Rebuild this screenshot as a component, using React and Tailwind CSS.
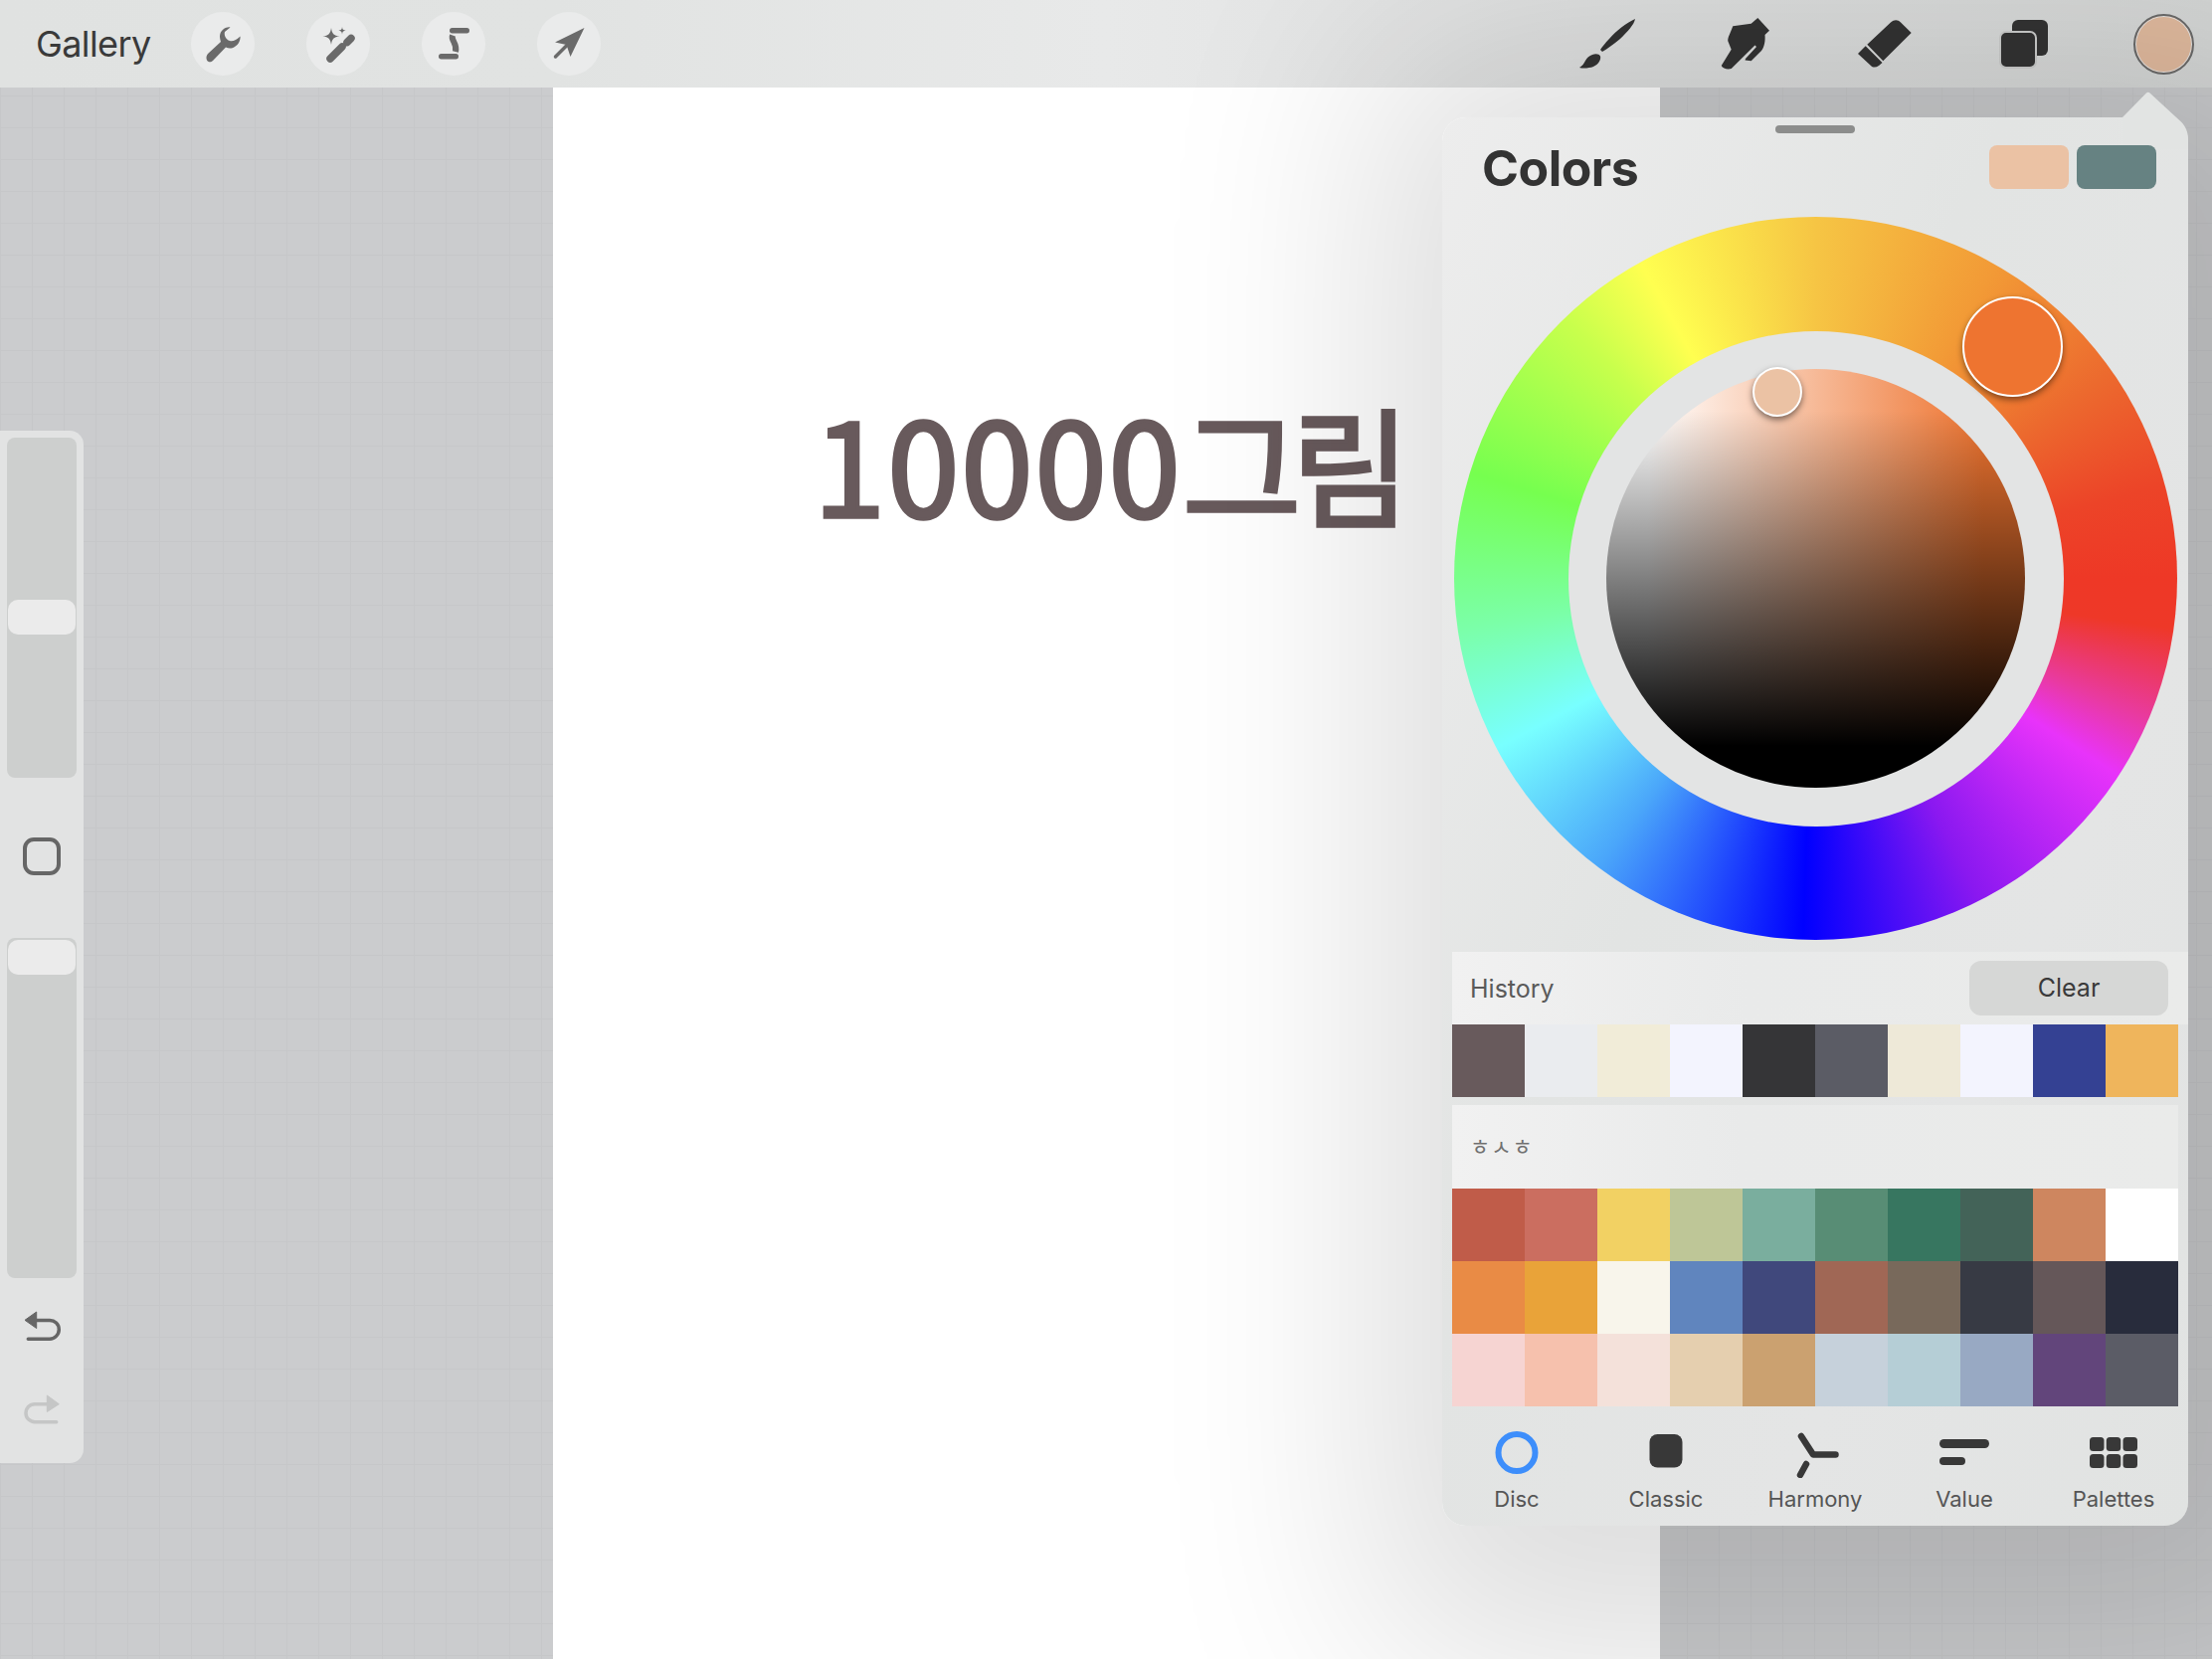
import React from "react";

const historyColors = ["#685A5C", "#EAECEF", "#F1ECD8", "#F3F4FE", "#353537", "#5B5C65", "#EEE9D8", "#F3F4FE", "#344193", "#EFB55C"];
const paletteColors = [
    "#C05C49", "#CB6E60", "#F2D163", "#BEC697", "#7AAE9E", "#588D75", "#377660", "#436358", "#CE865F", "#FFFFFF",
    "#E98B45", "#E9A339", "#F8F5EB", "#6085BE", "#40487C", "#A06755", "#78695B", "#373A44", "#655759", "#282C3C",
    "#F6D4D2", "#F6C1AD", "#F4E1DA", "#E5CFAF", "#CBA170", "#C6D1DB", "#B5CED6", "#98A9C3", "#62457B", "#5B5C66",
];

function ToolButton({ children }) {
    return (
        <div className="w-16 h-16 rounded-full bg-[#EAEBEB]">
            <svg viewBox="0 0 64 64" className="w-16 h-16" fill="#6A6A6A">
                {children}
            </svg>
        </div>
    );
}

function TopIcon({ children }) {
    return (
        <svg viewBox="0 0 60 60" className="w-[60px] h-[60px]" fill="#333333">
            {children}
        </svg>
    );
}

function Swatch({ color }) {
    return <div className="h-[73px]" style={{ backgroundColor: color }} />;
}

function Tab({ label, children }) {
    return (
        <div className="flex flex-col items-center">
            <svg viewBox="0 0 50 50" className="w-[50px] h-[50px]" fill="#383838">
                {children}
            </svg>
            <span className="mt-[6px] text-[22px] leading-[30px] text-[#555555]">{label}</span>
        </div>
    );
}

function Slider({ thumbTop }) {
    return (
        <div className={`w-[70px] h-[342px] mx-auto rounded-lg bg-[#CDCFCE] px-px ${thumbTop}`}>
            <div className="h-[35px] rounded-[10px] bg-[#EBEBEB]" />
        </div>
    );
}

function Sidebar() {
    return (
        <div className="w-[84px] h-[1038px] mt-[345px] pt-[7px] bg-[#E2E3E3] rounded-r-[14px]">
            <Slider thumbTop="pt-[163px]" />
            <div className="w-[38px] h-[38px] mx-auto mt-[60px] rounded-[11px] border-4 border-[#666666]" />
            <div className="mt-[63px]">
                <Slider thumbTop="pt-[2px]" />
            </div>
            <svg viewBox="0 0 40 40" className="w-10 h-10 ml-[22px] mt-[29px]">
                <path d="M3 13.3 14.7 5v16.5z" fill="#666666" stroke="#666666" strokeWidth="1" strokeLinejoin="round" />
                <path d="M14 13.5h14c5 0 9.300 3.500 9.300 9.200 0 5-4.300 9.600-9.300 9.600H6.300" fill="none" stroke="#666666" strokeWidth="3.500" strokeLinecap="round" />
            </svg>
            <svg viewBox="0 0 40 40" className="w-10 h-10 ml-[22px] mt-[44px]">
                <path d="M37.300 13.700 25.300 5v16.500z" fill="#C5C6C6" stroke="#C5C6C6" strokeWidth="1" strokeLinejoin="round" />
                <path d="M26 13.700H13c-5 0-9 3.800-9 9 0 5 4 9 9 9h21.700" fill="none" stroke="#C5C6C6" strokeWidth="3.500" strokeLinecap="round" />
            </svg>
        </div>
    );
}

function TopBar() {
    return (
        <div className="h-[88px] flex items-center justify-between pl-[36px] pr-[18px] bg-[linear-gradient(90deg,#E0E2E1,#E1E3E2_25%,#E8E9E9_50%,#E4E5E5_60%,#D6D8D7)]">
            <div className="flex items-center">
                <span className="w-[115px] text-[36px] leading-none text-[#3A3A3A] tracking-[-0.6px] mr-[41px]">Gallery</span>
                <div className="flex gap-[52px]">
                    <ToolButton>
                        <path d="M17 42 30 30c-2-6-1-10 3-13 2-1 4-2 6.500-1.500L34 20c-1 3 1 8 5 9 3 1 7-1 10.500-4.500.5 3.500-1.500 8.500-5.500 10.500-3 2-6 2-9 .5L22 49c-2 2-5 1.500-6-.5-1-2.500-.5-4.500 1-6.500z" />
                    </ToolButton>
                    <ToolButton>
                        <path d="M25 16c.8 6 2.500 7.700 8.500 8.500-6 .8-7.700 2.500-8.500 8.500-.8-6-2.500-7.700-8.500-8.500 6-.8 7.700-2.500 8.500-8.500zM36 15c.3 2.700 1 3.400 3.700 3.700-2.700.3-3.400 1-3.700 3.700-.3-2.700-1-3.400-3.700-3.700 2.700-.3 3.400-1 3.700-3.700z" />
                        <path d="M24 47 36 35M41 30.500l4-4" stroke="#6A6A6A" strokeWidth="7.500" strokeLinecap="round" fill="none" />
                    </ToolButton>
                    <ToolButton>
                        <rect x="28" y="16" width="20" height="5.500" rx="2.700" />
                        <rect x="17" y="42" width="20" height="5.500" rx="2.700" />
                        <path d="M31 23.500C29 29 36 31 34 40" stroke="#6A6A6A" strokeWidth="6" fill="none" />
                    </ToolButton>
                    <ToolButton>
                        <path d="M47.500 16 18 30.500 29.500 33 33.500 45z" />
                        <path d="M18.500 45 30 33.500" stroke="#6A6A6A" strokeWidth="3.500" strokeLinecap="round" />
                    </ToolButton>
                </div>
            </div>
            <div className="flex items-center gap-[80px]">
                <TopIcon>
                    <path d="M59 5c-9 4-19 12-26 20-4 4-7 8-9 11l2 2c5-3 12-8 18-13 7-7 14-14 15-20z" />
                    <path d="M16 41c3-1.500 7-1 8 1.500 1 3.500-2 8.500-7 10.500-4 1.500-10 2-14 1 3-2 4.500-4 6-7 1.500-3 4-5 7-6z" />
                </TopIcon>
                <TopIcon>
                    <path d="M42.300 4 54 16.700 49.500 21c.5 6-.5 12-3.500 16l-10.300 10.300L29.500 46.500 30 45l11-12-1.500-1.500L15.700 55c-3.700 1-8.700 0-10-3L15.700 35.700l-3.400-8.400c-.3-3.300 1.700-6.300 5-15L35.700 9.700z" />
                </TopIcon>
                <TopIcon>
                    <path d="M12.300 30.700 36 8.500c3.500-3 7-3 10 0L56.700 19 28.300 47.300z" />
                    <path d="M10.700 32.300 27.500 49 24 52c-3 2-6 2-8 0L3 40z" />
                </TopIcon>
                <TopIcon>
                    <rect x="18" y="6" width="36" height="36" rx="6" />
                    <rect x="6" y="18" width="36" height="36" rx="6" stroke="#CCCDCC" strokeWidth="2" />
                </TopIcon>
                <div className="w-[61px] h-[61px] rounded-full border-2 border-[#6B6B6B] bg-[#E2BB9F] shadow-[inset_0_0_0_1px_#E6E6E6]" />
            </div>
        </div>
    );
}

function ColorDisc() {
    return (
        <div className="relative w-[727px] h-[727px] ml-[12px] mt-[28px] rounded-full flex items-center justify-center bg-[conic-gradient(from_0deg,#F6C544,#F29A36_30deg,#EC6A2E_55deg,#EC4428_75deg,#EE3826_90deg,#EE3828_98deg,#E93AA0_113deg,#E833FA_123deg,#8A18F0_153deg,#0000FF_182deg,#4AA6FA_217deg,#78FFFF_242deg,#7BFFA8_262deg,#76FF4F_287deg,#C8FF4C_316deg,#FFFF50_331deg,#F6C544)]">
            <div className="w-[498px] h-[498px] rounded-full bg-[#E3E4E4] flex items-center justify-center">
                <div className="w-[421px] h-[421px] rounded-full bg-[linear-gradient(to_bottom,transparent_10%,#000_90%),linear-gradient(to_right,#fff_10%,#EE7430_90%)]" />
            </div>
            <div className="absolute left-[511px] top-[80px] w-[101px] h-[101px] rounded-full border-2 border-white bg-[#EE7430] shadow-[0_3px_6px_rgba(0,0,0,0.45)]" />
            <div className="absolute left-[300px] top-[151px] w-[50px] h-[50px] rounded-full border-2 border-white bg-[#EBC2A4] shadow-[0_3px_6px_rgba(0,0,0,0.5)]" />
        </div>
    );
}

function ColorsPopover() {
    return (
        <div className="absolute left-[1450px] top-[118px] w-[750px] h-[1416px] rounded-[24px] pt-2 bg-[linear-gradient(115deg,#EDEDED,#E2E4E3_40%,#E4E5E5_70%,#E1E3E2)] shadow-[40px_30px_220px_110px_rgba(0,0,0,0.135)]">
            <svg viewBox="0 0 70 60" className="absolute right-0 top-[-28px] w-[70px] h-[60px]" fill="#E2E4E3">
                <path d="M4 28 28 3.500c1-1 2.500-1 3.500 0L63.500 33c3.500 4 6.500 9 6.500 17v10H4z" />
            </svg>
            <div className="relative w-20 h-2 mx-auto rounded bg-[#8C8D8C]" />
            <div className="relative flex items-center justify-between h-[44px] mt-3 pl-[40px] pr-[32px]">
                <span className="text-[50px] leading-none font-bold text-[#333333] tracking-[-0.5px] pt-[2px]">Colors</span>
                <div className="flex gap-2">
                    <div className="w-20 h-[44px] rounded-lg bg-[#EBC2A4]" />
                    <div className="w-20 h-[44px] rounded-lg bg-[#668282]" />
                </div>
            </div>
            <ColorDisc />
            <div className="h-[73px] ml-[10px] mt-3 pl-[18px] pr-5 flex items-center justify-between bg-[linear-gradient(90deg,#F1F1F1,#E9EAEA_40%,#EAEBEA)]">
                <span className="text-[25px] text-[#5A5A5A] pt-[2px]">History</span>
                <div className="w-[200px] h-[55px] rounded-xl bg-[#D6D7D6] flex items-center justify-center text-[25px] text-[#3A3A3A]">Clear</div>
            </div>
            <div className="w-[730px] ml-[10px] grid grid-cols-10">
                {historyColors.map((c, i) => (
                    <Swatch key={i} color={c} />
                ))}
            </div>
            <div className="w-[730px] h-[84px] ml-[10px] mt-2 pl-[18px] pb-[3px] flex items-center bg-[linear-gradient(90deg,#F1F1F1,#E9EAEA_40%,#EAEBEA)]">
                <span className="text-[22px] tracking-[1px] text-[#707070] font-['Noto_Sans_CJK_KR',sans-serif]">ㅎㅅㅎ</span>
            </div>
            <div className="w-[730px] ml-[10px] grid grid-cols-10">
                {paletteColors.map((c, i) => (
                    <Swatch key={i} color={c} />
                ))}
            </div>
            <div className="grid grid-cols-5 pt-[22px]">
                <Tab label="Disc">
                    <circle cx="25" cy="24.500" r="18.500" fill="none" stroke="#3D8EFB" strokeWidth="6" />
                </Tab>
                <Tab label="Classic">
                    <rect x="8.500" y="6" width="33" height="33.500" rx="8" />
                </Tab>
                <Tab label="Harmony">
                    <path d="M11 8 23 26.500H45.500M16 36 10 47" fill="none" stroke="#383838" strokeWidth="6.500" strokeLinecap="round" strokeLinejoin="round" />
                </Tab>
                <Tab label="Value">
                    <rect x="0" y="11" width="50" height="9" rx="4.500" />
                    <rect x="0" y="29" width="26" height="8" rx="4" />
                </Tab>
                <Tab label="Palettes">
                    <rect x="1" y="9" width="14.500" height="14" rx="3.500" />
                    <rect x="17.750" y="9" width="14.500" height="14" rx="3.500" />
                    <rect x="34.500" y="9" width="14.500" height="14" rx="3.500" />
                    <rect x="1" y="26" width="14.500" height="14" rx="3.500" />
                    <rect x="17.750" y="26" width="14.500" height="14" rx="3.500" />
                    <rect x="34.500" y="26" width="14.500" height="14" rx="3.500" />
                </Tab>
            </div>
        </div>
    );
}

export default function App() {
    return (
        <div className="relative w-[2224px] h-[1668px] overflow-hidden bg-[#CBCCCE] bg-[linear-gradient(to_right,#C6C7C9_1px,transparent_1px),linear-gradient(to_bottom,#C6C7C9_1px,transparent_1px)] bg-[size:32px_32px] font-['Inter','Liberation_Sans',sans-serif]">
            <TopBar />
            <div className="flex h-[1580px]">
                <div className="w-[556px]">
                    <Sidebar />
                </div>
                <div className="w-[1113px] bg-white pl-[262px] pt-[295px]">
                    <span className="block text-[130px] leading-[160px] font-normal text-[#685A5C] [-webkit-text-stroke:3.5px_#685A5C] font-['Noto_Sans_CJK_KR',sans-serif]">
                        <span className="tracking-[2px]">10000</span>
                        <span className="tracking-[-10px]">그림</span>
                    </span>
                </div>
            </div>
            <ColorsPopover />
        </div>
    );
}
